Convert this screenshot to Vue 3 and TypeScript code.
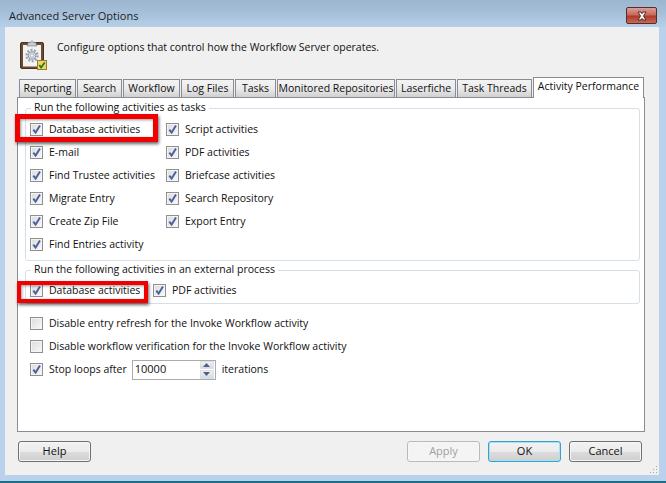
<script setup lang="ts">
interface Tab { label: string; width: number; active?: boolean }
const tabs: Tab[] = [
  { label: 'Reporting', width: 57 },
  { label: 'Search', width: 45 },
  { label: 'Workflow', width: 57 },
  { label: 'Log Files', width: 53 },
  { label: 'Tasks', width: 41 },
  { label: 'Monitored Repositories', width: 118 },
  { label: 'Laserfiche', width: 60 },
  { label: 'Task Threads', width: 75 },
  { label: 'Activity Performance', width: 111, active: true },
]
const taskItems = [
  'Database activities', 'E-mail', 'Find Trustee activities', 'Migrate Entry', 'Create Zip File', 'Find Entries activity',
  'Script activities', 'PDF activities', 'Briefcase activities', 'Search Repository', 'Export Entry',
]
const buttons = [
  { label: 'Apply', cls: 'disabled' },
  { label: 'OK', cls: 'primary' },
  { label: 'Cancel', cls: '' },
]
</script>

<template>
  <div class="window">
    <div class="titlebar">
      <span class="title">Advanced Server Options</span>
      <div class="close">
        <svg width="18" height="12" viewBox="0 0 18 12">
          <path d="M5 2h3l1 1.6L10 2h3l-2.500 4L13 10h-3L9 8.400 8 10H5l2.500-4z" fill="#f4f4f6" stroke="#5a2a2a" stroke-width="1" stroke-linejoin="round" />
        </svg>
      </div>
    </div>
    <div class="client">
      <div class="intro">
        <svg class="intro-icon" width="28" height="32" viewBox="0 0 28 32">
          <rect x="0.500" y="3.500" width="23" height="26" rx="1.500" fill="#6e4a2e" stroke="#4a3020" />
          <rect x="3" y="6" width="18" height="21.500" fill="#f3f3f3" />
          <path d="M8 5V3.500h2.500C11 1.500 13 1.500 13.500 3.500H16V5l1 2H7z" fill="#c9ccd0" stroke="#7e8287" stroke-width="0.700" />
          <circle cx="12" cy="16.500" r="5.500" fill="none" stroke="#9aa4b3" stroke-width="2.400" stroke-dasharray="2 1.400" />
          <circle cx="12" cy="16.500" r="3.800" fill="#dfe3ea" stroke="#8c96a6" />
          <circle cx="12" cy="16.500" r="1.800" fill="#f3f3f3" stroke="#9aa4b3" stroke-width="0.700" />
          <rect x="17.500" y="21.500" width="9" height="9" fill="#f1d26a" stroke="#9a7a22" />
          <path d="M19.300 26l1.800 2.500 3.600-5" fill="none" stroke="#1e7a16" stroke-width="1.700" />
        </svg>
        <span class="intro-text">Configure options that control how the Workflow Server operates.</span>
      </div>

      <div class="tabstrip">
        <div
          v-for="tab in tabs"
          :key="tab.label"
          class="tab"
          :class="{ active: tab.active }"
          :style="{ width: tab.width + 'px' }"
        >{{ tab.label }}</div>
      </div>

      <div class="panel">
        <div class="group group-tasks">
          <span class="legend">Run the following activities as tasks</span>
          <div class="task-grid">
            <label v-for="item in taskItems" :key="item" class="check">
              <span class="box"><svg width="11" height="11" viewBox="0 0 11 11"><path d="M2.300 5.600l2.300 3L9 1.500" fill="none" stroke="#4a5f9c" stroke-width="1.900" /></svg></span>
              {{ item }}
            </label>
          </div>
        </div>

        <div class="group group-external">
          <span class="legend">Run the following activities in an external process</span>
          <div class="external-row">
            <label class="check external-first">
              <span class="box"><svg width="11" height="11" viewBox="0 0 11 11"><path d="M2.300 5.600l2.300 3L9 1.500" fill="none" stroke="#4a5f9c" stroke-width="1.900" /></svg></span>
              Database activities
            </label>
            <label class="check">
              <span class="box"><svg width="11" height="11" viewBox="0 0 11 11"><path d="M2.300 5.600l2.300 3L9 1.500" fill="none" stroke="#4a5f9c" stroke-width="1.900" /></svg></span>
              PDF activities
            </label>
          </div>
        </div>

        <div class="options">
          <label class="check"><span class="box"></span>Disable entry refresh for the Invoke Workflow activity</label>
          <label class="check"><span class="box"></span>Disable workflow verification for the Invoke Workflow activity</label>
          <div class="check loops">
            <span class="box"><svg width="11" height="11" viewBox="0 0 11 11"><path d="M2.300 5.600l2.300 3L9 1.500" fill="none" stroke="#4a5f9c" stroke-width="1.900" /></svg></span>
            <span>Stop loops after</span>
            <div class="spinner">
              <span class="spin-value">10000</span>
              <div class="spin-buttons">
                <div class="spin-btn"><svg width="7" height="4" viewBox="0 0 7 4"><path d="M3.500 0L7 4H0z" fill="#4d6185" /></svg></div>
                <div class="spin-btn"><svg width="7" height="4" viewBox="0 0 7 4"><path d="M0 0h7L3.500 4z" fill="#4d6185" /></svg></div>
              </div>
            </div>
            <span>iterations</span>
          </div>
        </div>

        <div class="highlight highlight-a"></div>
        <div class="highlight highlight-b"></div>
      </div>

      <div class="actions">
        <div class="btn">Help</div>
        <div class="spacer"></div>
        <div v-for="b in buttons" :key="b.label" class="btn" :class="b.cls">{{ b.label }}</div>
      </div>

      <svg class="grip" width="9" height="9" viewBox="0 0 9 9">
        <path d="M7 1h1v1H7zM4 4h1v1H4zM7 4h1v1H7zM1 7h1v1H1zM4 7h1v1H4zM7 7h1v1H7z" fill="#a8a8a8" />
      </svg>
    </div>
    <div class="edge"></div>
  </div>
</template>

<style>
html, body { margin: 0; padding: 0; background: #b9d1ea; }
</style>

<style scoped>
.window {
  width: 666px;
  height: 483px;
  display: flex;
  flex-direction: column;
  overflow: hidden;
  font-family: "Open Sans", "Liberation Sans", sans-serif;
  font-size: 10.5px;
  color: #101010;
  background: #b9d1ea;
}
.titlebar {
  height: 27px;
  flex: none;
  display: flex;
  align-items: flex-start;
  justify-content: space-between;
  padding: 0 9px;
  box-sizing: border-box;
  background: linear-gradient(to bottom, #9db6cf 0%, #a7c0da 50%, #b7d0e9 100%);
}
.title {
  margin-top: 8px;
  font-size: 11px;
  line-height: 15px;
  color: #1a1f26;
}
.close {
  width: 31px;
  height: 17px;
  margin-top: 7px;
  box-sizing: border-box;
  border: 1px solid #5b2a2c;
  border-radius: 2px;
  background: linear-gradient(to bottom, #d9a097 0%, #c9695c 45%, #b03a2a 55%, #c56a55 100%);
  display: flex;
  align-items: center;
  justify-content: center;
}
.client {
  position: relative;
  height: 448px;
  flex: none;
  margin: 0 7px 0 5px;
  background: #f0f0f0;
  display: flex;
  flex-direction: column;
}
.intro {
  height: 50px;
  flex: none;
  display: flex;
  align-items: flex-start;
  padding: 11px 0 0 15px;
  box-sizing: border-box;
}
.intro-icon { flex: none; margin-top: 1px; }
.intro-text {
  margin: 2px 0 0 9px;
  line-height: 15px;
}
.tabstrip {
  height: 21px;
  flex: none;
  display: flex;
  align-items: flex-end;
  padding-left: 14px;
  position: relative;
  z-index: 1;
}
.tab {
  height: 19px;
  box-sizing: border-box;
  margin-right: 1px;
  border: 1px solid #898c95;
  border-bottom: 1px solid #898c95;
  background: linear-gradient(to bottom, #f3f3f3 0%, #ebebeb 50%, #d0d0d0 100%);
  text-align: center;
  line-height: 17px;
  white-space: nowrap;
}
.tab.active {
  height: 21px;
  margin-right: 0;
  background: #fff;
  border-bottom: none;
  line-height: 16px;
}
.panel {
  position: relative;
  height: 335px;
  flex: none;
  margin: -1px 14px 0 12px;
  box-sizing: border-box;
  border: 1px solid #898c95;
  background: #fff;
  padding: 10px 4px 0 7px;
}
.group {
  position: relative;
  box-sizing: border-box;
  border: 1px solid #d5dfe5;
  border-radius: 3px;
}
.group-tasks { height: 153px; padding: 9px 0 0 4px; }
.group-external { height: 34px; margin-top: 9px; padding: 9px 0 0 4px; }
.legend {
  position: absolute;
  left: 5px;
  top: -9px;
  padding: 0 3px;
  background: #fff;
  line-height: 15px;
  white-space: nowrap;
}
.task-grid {
  display: grid;
  grid-auto-flow: column;
  grid-template-rows: repeat(6, 23px);
  grid-template-columns: 136px 1fr;
}
.check {
  display: flex;
  align-items: center;
  height: 23px;
  line-height: 15px;
  white-space: nowrap;
}
.external-row { display: flex; margin-top: -1px; }
.external-first { width: 123px; }
.box {
  flex: none;
  width: 13px;
  height: 13px;
  box-sizing: border-box;
  margin-right: 6px;
  border: 1px solid #8e8f8f;
  background: linear-gradient(135deg, #dcdcdc 0%, #ececec 60%, #fbfbfb 100%);
  box-shadow: inset 0 0 0 1px #f4f4f4;
  display: flex;
  align-items: center;
  justify-content: center;
}
.options { margin-top: 8px; padding-left: 5px; }
.options .check + .check { margin-top: 0; }
.loops { margin-top: 0; }
.spinner {
  width: 84px;
  height: 20px;
  box-sizing: border-box;
  margin: 0 6px 0 5px;
  border: 1px solid #ababab;
  display: flex;
  justify-content: space-between;
  background: #fff;
}
.spin-value { padding-left: 2px; line-height: 15px; font-size: 11px; }
.spin-buttons {
  width: 14px;
  margin: 0 1px 0 0;
  display: flex;
  flex-direction: column;
  gap: 1px;
}
.spin-btn {
  flex: 1;
  background: linear-gradient(to bottom, #f0f0f0, #d5dbe4);
  border: 1px solid #dcdfe3;
  box-sizing: border-box;
  display: flex;
  align-items: center;
  justify-content: center;
}
.highlight {
  position: absolute;
  box-sizing: border-box;
  border: 5px solid #f00000;
  box-shadow: 1px 2px 3px rgba(0, 0, 0, 0.6), inset 1px 1px 3px rgba(0, 0, 0, 0.4);
  pointer-events: none;
}
.highlight-a { left: -3px; top: 16px; width: 143px; height: 28px; }
.highlight-b { left: -1px; top: 183px; width: 131px; height: 22px; border-width: 4px; }
.actions {
  flex: none;
  display: flex;
  gap: 8px;
  margin: 9px 17px 0 13px;
}
.spacer { flex: 1; }
.btn {
  width: 73px;
  height: 21px;
  box-sizing: border-box;
  border: 1px solid #707070;
  border-radius: 3px;
  background: linear-gradient(to bottom, #f2f2f2 0%, #ebebeb 50%, #dddddd 50%, #cfcfcf 100%);
  box-shadow: inset 0 0 0 1px #f6f6f6;
  text-align: center;
  line-height: 18px;
  font-size: 11px;
}
.btn.disabled {
  color: #a0a0a0;
  border-color: #bababa;
  background: #f4f4f4;
}
.btn.primary {
  border-color: #3c9fc8;
  box-shadow: inset 0 0 0 1px #a6e2f6;
}
.grip { position: absolute; right: 1px; bottom: 1px; }
.edge {
  flex: none;
  height: 8px;
  box-sizing: border-box;
  background: #b9d1ea;
  border-bottom: 2px solid #1b6f8a;
}
</style>
